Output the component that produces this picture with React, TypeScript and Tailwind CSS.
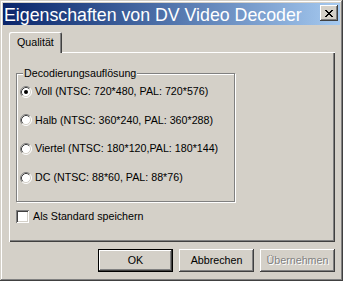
const raised =
  "shadow-[inset_-1px_-1px_#404040,inset_1px_1px_#ffffff,inset_-2px_-2px_#808080,inset_2px_2px_#d4d0c8]";

const options = [
  { label: "Voll (NTSC: 720*480, PAL: 720*576)", checked: true },
  { label: "Halb (NTSC: 360*240, PAL: 360*288)", checked: false },
  { label: "Viertel (NTSC: 180*120,PAL: 180*144)", checked: false },
  { label: "DC (NTSC: 88*60, PAL: 88*76)", checked: false },
];

export default function App() {
  return (
    <div className="flex h-[281px] w-[343px] flex-col bg-[#d4d0c8] p-[3px] font-['Liberation_Sans',Arial,sans-serif] text-[10.7px] leading-[13px] text-black shadow-[inset_-1px_-1px_#404040,inset_1px_1px_#d4d0c8,inset_-2px_-2px_#808080,inset_2px_2px_#ffffff]">
      {/* title bar */}
      <div className="flex h-[22px] shrink-0 items-start justify-between bg-linear-to-r from-[#0a246a] to-[#a6caf0] pl-[1px] pr-[2px]">
        <span className="pt-[1px] text-[17.75px] leading-[22px] whitespace-nowrap text-white">
          Eigenschaften von DV Video Decoder
        </span>
        <button className={`mt-[2px] flex h-[16px] w-[18px] items-center justify-center bg-[#d4d0c8] ${raised}`}>
          <svg width="8" height="7" viewBox="0 0 8 7" shapeRendering="crispEdges">
            <path
              fill="#000"
              d="M0 0h2v1H0z M6 0h2v1H6z M1 1h2v1H1z M5 1h2v1H5z M2 2h4v1H2z M3 3h2v1H3z M2 4h4v1H2z M1 5h2v1H1z M5 5h2v1H5z M0 6h2v1H0z M6 6h2v1H6z"
            />
          </svg>
        </button>
      </div>

      <div className="flex flex-col pl-[6px] pr-[5px] pt-[7px]">
        {/* tab strip */}
        <div className="flex">
          <div className="relative z-10 -mb-[1px] h-[21px] w-[53px] rounded-t-[2px] bg-[#d4d0c8] pl-[8px] pt-[4px] shadow-[inset_1px_1px_#ffffff,inset_-1px_0_#404040,inset_-2px_0_#808080]">
            Qualität
          </div>
        </div>

        {/* tab page */}
        <div className="flex h-[190px] w-[326px] flex-col pl-[7px] pt-[21px] shadow-[inset_1px_1px_#ffffff,inset_-1px_-1px_#404040,inset_-2px_-2px_#808080]">
          <div className="relative h-[129px] w-[219px] border border-[#808080] shadow-[1px_1px_#ffffff,inset_1px_1px_#ffffff]">
            <span className="absolute -top-[7px] left-[6px] bg-[#d4d0c8] px-[1px] whitespace-nowrap">
              Decodierungsauflösung
            </span>
            <div className="flex flex-col gap-[15.7px] pl-[3px] pt-[11px]">
              {options.map((opt) => (
                <div key={opt.label} className="flex h-[13px] items-center gap-[3px] whitespace-nowrap">
                  <Radio checked={opt.checked} />
                  <span>{opt.label}</span>
                </div>
              ))}
            </div>
          </div>

          <div className="mt-[7px] flex items-center gap-[4px]">
            <div className="h-[13px] w-[13px] bg-white shadow-[inset_1px_1px_#808080,inset_-1px_-1px_#ffffff,inset_2px_2px_#404040,inset_-2px_-2px_#d4d0c8]" />
            <span className="pt-[1px]">Als Standard speichern</span>
          </div>
        </div>

        {/* buttons */}
        <div className="mt-[7px] flex justify-end gap-[6px]">
          <button className="h-[23px] w-[75px] border border-black bg-[#d4d0c8]">
            <div className={`flex h-full w-full items-center justify-center ${raised}`}>OK</div>
          </button>
          <button className={`flex h-[23px] w-[75px] items-center justify-center bg-[#d4d0c8] ${raised}`}>
            Abbrechen
          </button>
          <button
            disabled
            className={`flex h-[23px] w-[75px] items-center justify-center bg-[#d4d0c8] text-[#808080] [text-shadow:1px_1px_#ffffff] ${raised}`}
          >
            Übernehmen
          </button>
        </div>
      </div>
    </div>
  );
}

function Radio({ checked }: { checked: boolean }) {
  return (
    <svg width="12" height="12" viewBox="0 0 12 12" className="shrink-0">
      <circle cx="6" cy="6" r="5" fill="#fff" />
      <path d="M2.11 9.89 A5.5 5.5 0 0 1 9.89 2.11" fill="none" stroke="#808080" strokeWidth="1" />
      <path d="M9.89 2.11 A5.5 5.5 0 0 1 2.11 9.89" fill="none" stroke="#ffffff" strokeWidth="1" />
      <path d="M2.82 9.18 A4.5 4.5 0 0 1 9.18 2.82" fill="none" stroke="#404040" strokeWidth="1" />
      <path d="M9.18 2.82 A4.5 4.5 0 0 1 2.82 9.18" fill="none" stroke="#d4d0c8" strokeWidth="1" />
      {checked && <circle cx="6" cy="6" r="2" fill="#000" />}
    </svg>
  );
}
